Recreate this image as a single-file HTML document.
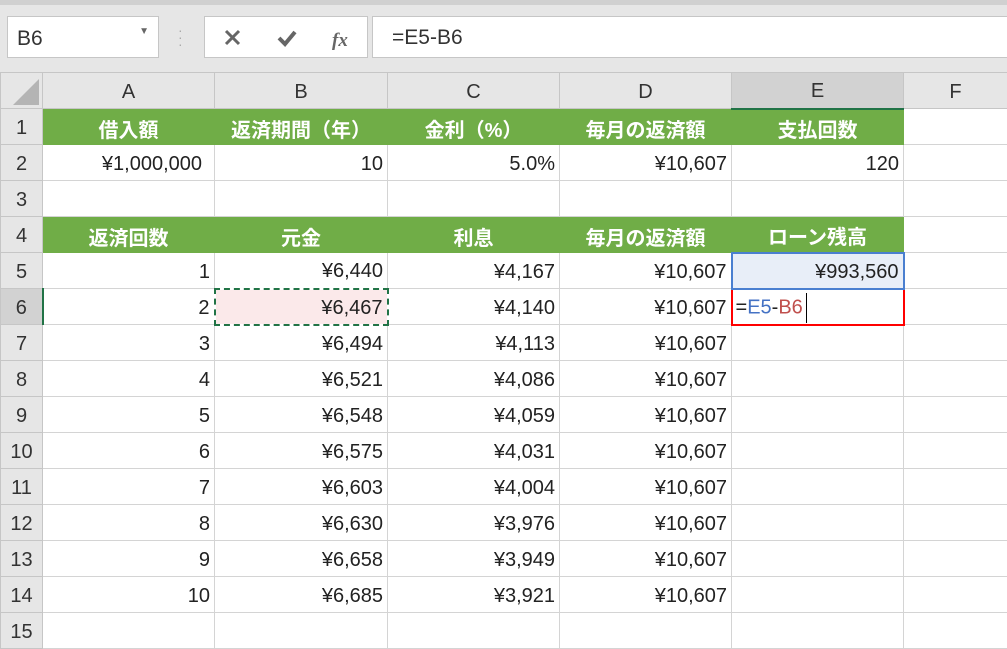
<!DOCTYPE html><html><head><meta charset="utf-8"><style>
body{margin:0;width:1007px;height:649px;overflow:hidden;background:#fff;font-family:"Liberation Sans","Noto Sans CJK JP",sans-serif;position:relative}
.top{position:absolute;left:0;top:0;width:1007px;height:73px;background:#e6e6e6;border-top:5px solid #d0d0d0;box-sizing:border-box}
.box{position:absolute;background:#fff;border:1px solid #c6c6c6;box-sizing:border-box}
table{position:absolute;left:0;top:72px;border-collapse:collapse;table-layout:fixed;width:1007px}
td{border:1px solid #d4d4d4;height:36px;padding:3px 4px 0 4px;font-size:20px;color:#222;text-align:right;white-space:nowrap;overflow:hidden;box-sizing:border-box}
tr.h td{background:#e6e6e6;text-align:center;color:#333;border-color:#c6c6c6;height:36px}
td.r{background:#e6e6e6;text-align:center;color:#333;border-color:#c6c6c6;padding:3px 0 0 0}
tr.g td.c{background:#70ad47;color:#fff;font-weight:bold;text-align:center;border-color:#70ad47}
</style></head><body>
<div class="top">
<div class="box" style="left:7px;top:11px;width:152px;height:42px;font-size:21px;color:#333;padding:10px 0 0 9px">B6<span style="position:absolute;right:9px;top:9px;font-size:10px;color:#666">▼</span></div>
<div style="position:absolute;left:178px;top:22px;color:#aaa;font-size:14px;line-height:7px">·<br>·<br>·</div>
<div class="box" style="left:204px;top:11px;width:164px;height:42px">
<svg width="164" height="42" style="position:absolute;left:0;top:0"><path d="M21 14 L34 27 M34 14 L21 27" stroke="#666" stroke-width="3"/><path d="M74 21 L80 27 L90 15" stroke="#666" stroke-width="4" fill="none"/><text x="127" y="29" font-family="Liberation Serif" font-style="italic" font-weight="bold" font-size="19" fill="#666">fx</text></svg></div>
<div class="box" style="left:372px;top:11px;width:640px;height:42px;font-size:21px;color:#333;padding:9px 0 0 19px">=E5-B6</div>
</div>
<table>
<colgroup><col style="width:42px"><col style="width:172px"><col style="width:173px"><col style="width:172px"><col style="width:172px"><col style="width:172px"><col style="width:104px"></colgroup>
<tr class="h"><td style="background:#e6e6e6;padding:0;position:relative"><svg width="26" height="26" style="position:absolute;left:12px;top:6px"><path d="M26 0 L26 26 L0 26 Z" fill="#b4b4b4"/></svg></td><td>A</td><td>B</td><td>C</td><td>D</td><td style="background:#d2d2d2;border-bottom:2px solid #217346">E</td><td>F</td></tr>
<tr class="g"><td class="r">1</td><td class="c">借入額</td><td class="c">返済期間（年）</td><td class="c">金利（%）</td><td class="c">毎月の返済額</td><td class="c">支払回数</td><td></td></tr>
<tr><td class="r">2</td><td style="padding-right:12px">¥1,000,000</td><td>10</td><td>5.0%</td><td>¥10,607</td><td>120</td><td></td></tr>
<tr><td class="r">3</td><td></td><td></td><td></td><td></td><td></td><td></td></tr>
<tr class="g"><td class="r">4</td><td class="c">返済回数</td><td class="c">元金</td><td class="c">利息</td><td class="c">毎月の返済額</td><td class="c">ローン残高</td><td></td></tr>
<tr><td class="r">5</td><td>1</td><td>¥6,440</td><td>¥4,167</td><td>¥10,607</td><td style="background:#e8eef8;border:2px solid #4a7fd0">¥993,560</td><td></td></tr>
<tr><td class="r" style="background:#d2d2d2;border-right:2px solid #217346">6</td><td>2</td><td style="background:#fbe9ea;border:2px dashed #217346">¥6,467</td><td>¥4,140</td><td>¥10,607</td><td style="border:2px solid #f00;text-align:left;padding-left:3px">=<span style="color:#4472c4">E5</span>-<span style="color:#c0504d">B6</span><span style="display:inline-block;width:1px;height:30px;background:#000;vertical-align:middle;margin-left:3px"></span></td><td></td></tr>
<tr><td class="r">7</td><td>3</td><td>¥6,494</td><td>¥4,113</td><td>¥10,607</td><td></td><td></td></tr>
<tr><td class="r">8</td><td>4</td><td>¥6,521</td><td>¥4,086</td><td>¥10,607</td><td></td><td></td></tr>
<tr><td class="r">9</td><td>5</td><td>¥6,548</td><td>¥4,059</td><td>¥10,607</td><td></td><td></td></tr>
<tr><td class="r">10</td><td>6</td><td>¥6,575</td><td>¥4,031</td><td>¥10,607</td><td></td><td></td></tr>
<tr><td class="r">11</td><td>7</td><td>¥6,603</td><td>¥4,004</td><td>¥10,607</td><td></td><td></td></tr>
<tr><td class="r">12</td><td>8</td><td>¥6,630</td><td>¥3,976</td><td>¥10,607</td><td></td><td></td></tr>
<tr><td class="r">13</td><td>9</td><td>¥6,658</td><td>¥3,949</td><td>¥10,607</td><td></td><td></td></tr>
<tr><td class="r">14</td><td>10</td><td>¥6,685</td><td>¥3,921</td><td>¥10,607</td><td></td><td></td></tr>
<tr><td class="r">15</td><td></td><td></td><td></td><td></td><td></td><td></td></tr>
</table>
</body></html>
